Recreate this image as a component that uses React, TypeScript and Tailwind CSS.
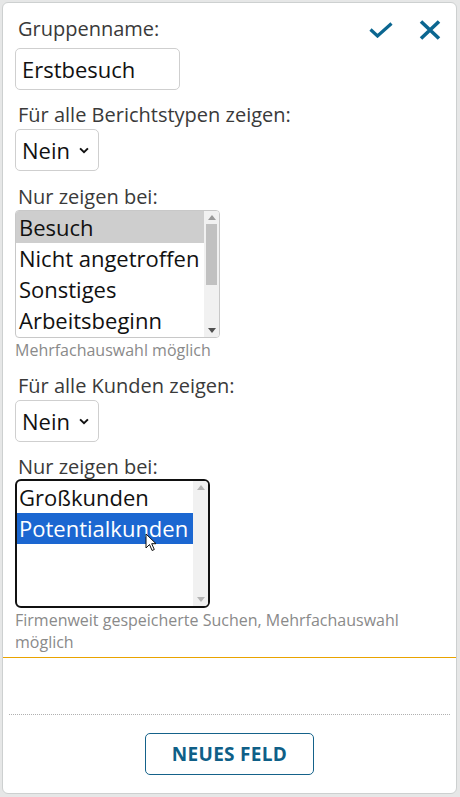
import { useState } from "react";

const REPORT_TYPES = ["Besuch", "Nicht angetroffen", "Sonstiges", "Arbeitsbeginn"];
const CUSTOMER_SEARCHES = ["Großkunden", "Potentialkunden"];

function Chevron() {
  return (
    <svg viewBox="0 0 12 8" className="h-[7px] w-[12px]" fill="none" stroke="#111" strokeWidth="2.2">
      <path d="M1.5 1.5 6 6l4.5-4.5" />
    </svg>
  );
}

function YesNoSelect({ value }: { value: string }) {
  return (
    <div className="flex h-[42px] w-[84px] items-center gap-[8px] rounded-[5px] border border-[#cfcfcf] bg-white pl-[6px] text-[22px] text-[#111]">
      <span>{value}</span>
      <Chevron />
    </div>
  );
}

function Scrollbar({ thumb, muted }: { thumb: boolean; muted?: boolean }) {
  const arrow = muted ? "#b5b5b5" : "#9a9a9a";
  return (
    <div className="flex w-[15px] flex-col items-center bg-[#f1f1f1] py-[4px]">
      <svg viewBox="0 0 8 5" className="h-[5px] w-[8px]">
        <path d="M0 5 4 0l4 5z" fill={arrow} />
      </svg>
      <div className="mt-[4px] flex-1 self-stretch px-[2px]">
        {thumb && <div className="h-[61px] bg-[#c1c1c1]" />}
      </div>
      <svg viewBox="0 0 8 5" className="h-[5px] w-[8px]">
        <path d="M0 0h8L4 5z" fill={muted ? arrow : "#505050"} />
      </svg>
    </div>
  );
}

function Label({ children }: { children: React.ReactNode }) {
  return <p className="pl-[3px] text-[20px] leading-[26px] text-[#3a3a3a]">{children}</p>;
}

function Hint({ children }: { children: React.ReactNode }) {
  return <p className="text-[16px] leading-[22px] text-[#8a8a8a]">{children}</p>;
}

export default function App() {
  const [name, setName] = useState("Erstbesuch");

  return (
    <div
      className="min-h-screen bg-[#e6e7e7] pt-[2px] pr-[3px] pb-[3px] pl-[2px]"
      style={{ fontFamily: '"Open Sans", "Noto Sans", sans-serif' }}>
      <div className="flex h-[792px] flex-col rounded-[6px] border border-[#cdd0d0] bg-white">
        <div className="border-b border-b-[#e9a300] px-[12px] pb-[4px]">
          {/* Kopfzeile */}
          <div className="flex items-start justify-between pt-[13px]">
            <Label>Gruppenname:</Label>
            <div className="mr-[3px] flex items-center gap-[26px] pt-[4px]">
              <svg viewBox="0 0 24 16" className="h-[16px] w-[24px]" fill="none" stroke="#0b6690" strokeWidth="3.2">
                <path d="M1.5 7.5 8.5 14 22.5 1.5" />
              </svg>
              <svg viewBox="0 0 22 20" className="h-[20px] w-[22px]" fill="none" stroke="#0b6690" strokeWidth="3.6">
                <path d="M2 1.5 20 18.5M20 1.5 2 18.5" />
              </svg>
            </div>
          </div>

          <input
            value={name}
            onChange={(e) => setName(e.target.value)}
            className="mt-[6px] h-[42px] w-[165px] rounded-[5px] border border-[#cfcfcf] bg-white px-[6px] text-[22px] text-[#111] outline-none"
          />

          <div className="mt-[12px]">
            <Label>Für alle Berichtstypen zeigen:</Label>
          </div>
          <div className="mt-[1px]">
            <YesNoSelect value="Nein" />
          </div>

          <div className="mt-[13px]">
            <Label>Nur zeigen bei:</Label>
          </div>
          <div className="flex h-[128px] w-[205px] overflow-hidden rounded-[4px] border border-[#c8c8c8] bg-white">
            <ul className="flex-1 text-[22px] text-[#111]">
              {REPORT_TYPES.map((t, i) => (
                <li
                  key={t}
                  className={i === 0 ? "h-[32px] bg-[#cecece] pl-[3px] leading-[32px]" : "h-[31px] pl-[3px] leading-[31px]"}>
                  {t}
                </li>
              ))}
            </ul>
            <Scrollbar thumb />
          </div>
          <div className="mt-[1px]">
            <Hint>Mehrfachauswahl möglich</Hint>
          </div>

          <div className="mt-[12px]">
            <Label>Für alle Kunden zeigen:</Label>
          </div>
          <div className="mt-[1px]">
            <YesNoSelect value="Nein" />
          </div>

          <div className="mt-[12px]">
            <Label>Nur zeigen bei:</Label>
          </div>
          <div className="relative -mt-[1px] flex h-[129px] w-[195px] overflow-hidden rounded-[6px] border-2 border-[#111] bg-white">
            <ul className="flex-1 pt-[1px] text-[22px] leading-[31px] text-[#111]">
              {CUSTOMER_SEARCHES.map((t, i) => (
                <li key={t} className={i === 1 ? "bg-[#1b67d1] pl-[2px] text-white" : "pl-[2px]"}>
                  {t}
                </li>
              ))}
            </ul>
            <Scrollbar thumb={false} muted />
            {/* Mauszeiger */}
            <svg viewBox="0 0 12 19" className="absolute top-[52px] left-[128px] h-[19px] w-[12px]">
              <path d="M1 1v14l3.5-3.5 2.6 6 2.2-1-2.6-5.8H11z" fill="#fff" stroke="#111" strokeWidth="1" strokeLinejoin="round" />
            </svg>
          </div>
          <div className="mt-[1px] pr-[40px]">
            <Hint>Firmenweit gespeicherte Suchen, Mehrfachauswahl möglich</Hint>
          </div>
        </div>

        <div className="mx-[6px] mt-[56px] border-t border-dotted border-[#b0b0b0]" />

        <div className="flex justify-center pt-[18px]">
          <button
            type="button"
            className="h-[42px] w-[169px] rounded-[5px] border border-[#15628a] text-[19px] font-bold tracking-[0.3px] text-[#0f5f87]">
            NEUES FELD
          </button>
        </div>
      </div>
    </div>
  );
}
